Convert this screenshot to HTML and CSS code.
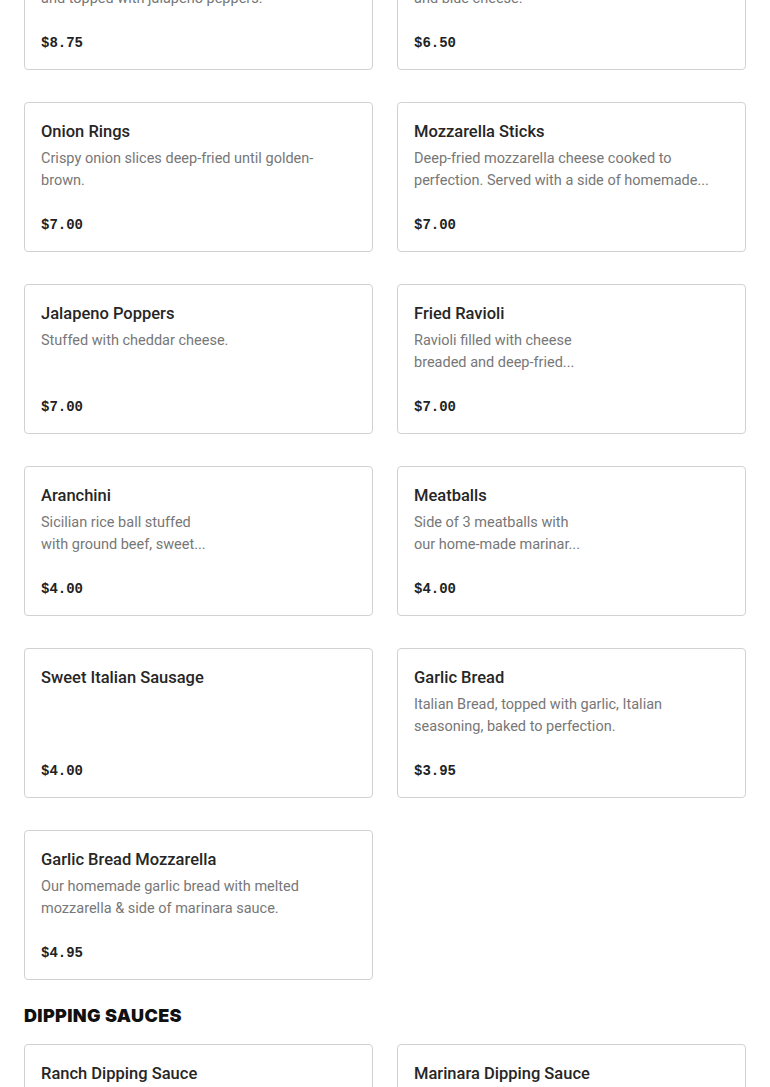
FILE: index.html
```html
<!DOCTYPE html>
<html>
<head>
<meta charset="utf-8">
<link rel="stylesheet" href="styles.css">
</head>
<body>
<main class="menu">
  <section class="grid">
    <div class="card">
      <div class="title">Jalapeno Wings</div>
      <div class="desc">Crispy wings tossed in buffalo sauce<br>and topped with jalapeno peppers.</div>
      <div class="price">$8.75</div>
    </div>
    <div class="card">
      <div class="title">Buffalo Wings</div>
      <div class="desc">Served with celery sticks<br>and blue cheese.</div>
      <div class="price">$6.50</div>
    </div>
    <div class="card">
      <div class="title">Onion Rings</div>
      <div class="desc">Crispy onion slices deep-fried until golden-<br>brown.</div>
      <div class="price">$7.00</div>
    </div>
    <div class="card">
      <div class="title">Mozzarella Sticks</div>
      <div class="desc">Deep-fried mozzarella cheese cooked to<br>perfection. Served with a side of homemade...</div>
      <div class="price">$7.00</div>
    </div>
    <div class="card">
      <div class="title">Jalapeno Poppers</div>
      <div class="desc">Stuffed with cheddar cheese.</div>
      <div class="price">$7.00</div>
    </div>
    <div class="card">
      <div class="title">Fried Ravioli</div>
      <div class="desc">Ravioli filled with cheese<br>breaded and deep-fried...</div>
      <div class="price">$7.00</div>
    </div>
    <div class="card">
      <div class="title">Aranchini</div>
      <div class="desc">Sicilian rice ball stuffed<br>with ground beef, sweet...</div>
      <div class="price">$4.00</div>
    </div>
    <div class="card">
      <div class="title">Meatballs</div>
      <div class="desc">Side of 3 meatballs with<br>our home-made marinar...</div>
      <div class="price">$4.00</div>
    </div>
    <div class="card">
      <div class="title">Sweet Italian Sausage</div>
      <div class="desc"></div>
      <div class="price">$4.00</div>
    </div>
    <div class="card">
      <div class="title">Garlic Bread</div>
      <div class="desc">Italian Bread, topped with garlic, Italian<br>seasoning, baked to perfection.</div>
      <div class="price">$3.95</div>
    </div>
    <div class="card">
      <div class="title">Garlic Bread Mozzarella</div>
      <div class="desc">Our homemade garlic bread with melted<br>mozzarella &amp; side of marinara sauce.</div>
      <div class="price">$4.95</div>
    </div>
  </section>
  <h2 class="section-title">DIPPING SAUCES</h2>
  <section class="grid">
    <div class="card">
      <div class="title">Ranch Dipping Sauce</div>
      <div class="desc">Homemade ranch dressing.</div>
      <div class="price">$0.75</div>
    </div>
    <div class="card">
      <div class="title">Marinara Dipping Sauce</div>
      <div class="desc">Homemade marinara sauce.</div>
      <div class="price">$0.75</div>
    </div>
  </section>
</main>
</body>
</html>
```
FILE: styles.css
```css
html, body {
  margin: 0;
  padding: 0;
  background: #fff;
}
body {
  font-family: Roboto, "Noto Sans", Arial, sans-serif;
  color: #1f1f1f;
}
.menu {
  margin-top: -80px;
  padding: 0 24px;
}
.grid {
  display: grid;
  grid-template-columns: 1fr 1fr;
  column-gap: 24px;
  row-gap: 32px;
}
.card {
  box-sizing: border-box;
  height: 150px;
  border: 1px solid #d2d2d2;
  border-radius: 4px;
  padding: 17px 16px 14px 16px;
  display: flex;
  flex-direction: column;
}
.title {
  font-size: 16.5px;
  font-weight: 500;
  line-height: 24px;
  color: #262626;
}
.desc {
  margin-top: 4px;
  font-size: 14.5px;
  line-height: 22px;
  color: #777;
  height: 44px;
  overflow: hidden;
}
.price {
  margin-top: auto;
  font-family: "Liberation Mono", "DejaVu Sans Mono", monospace;
  font-weight: 700;
  font-size: 14px;
  line-height: 24px;
  color: #222;
}
.section-title {
  margin: 24px 0 16px;
  font-family: Inter, Roboto, sans-serif;
  font-size: 18px;
  font-weight: 900;
  line-height: 24px;
  letter-spacing: 0.35px;
  color: #111;
}
```
